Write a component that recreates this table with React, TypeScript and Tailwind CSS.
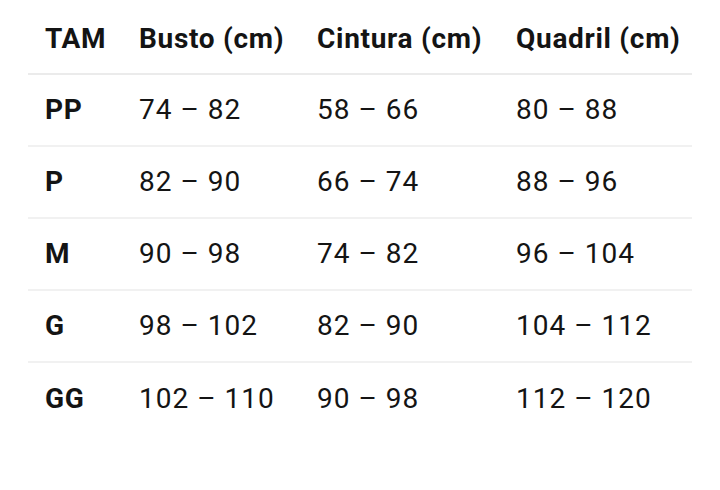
const rows = [
  ["PP", "74 – 82", "58 – 66", "80 – 88"],
  ["P", "82 – 90", "66 – 74", "88 – 96"],
  ["M", "90 – 98", "74 – 82", "96 – 104"],
  ["G", "98 – 102", "82 – 90", "104 – 112"],
  ["GG", "102 – 110", "90 – 98", "112 – 120"],
];

export default function App() {
  return (
    <div className="w-[720px] h-[490px] bg-white pt-[4px] font-['Roboto',sans-serif] text-[#141414]">
      <table className="ml-[28px] w-[664px] table-fixed border-collapse">
        <colgroup>
          <col className="w-[94px]" />
          <col className="w-[178px]" />
          <col className="w-[199px]" />
          <col className="w-[193px]" />
        </colgroup>
        <thead>
          <tr className="border-b-2 border-[#ebebeb]">
            {["TAM", "Busto (cm)", "Cintura (cm)", "Quadril (cm)"].map((h) => (
              <th
                key={h}
                className="h-[70px] pl-[17px] text-left align-middle text-[28px] font-bold tracking-[0.7px] whitespace-nowrap"
              >
                {h}
              </th>
            ))}
          </tr>
        </thead>
        <tbody>
          {rows.map((r, i) => (
            <tr
              key={r[0]}
              className={i < rows.length - 1 ? "border-b-2 border-[#f1f1f1]" : ""}
            >
              <td className="h-[72px] pl-[17px] text-[28px] font-bold tracking-[0.7px]">{r[0]}</td>
              {r.slice(1).map((v, j) => (
                <td key={j} className="h-[72px] pl-[17px] text-[28px] tracking-[1px] whitespace-nowrap">
                  {v}
                </td>
              ))}
            </tr>
          ))}
        </tbody>
      </table>
    </div>
  );
}
